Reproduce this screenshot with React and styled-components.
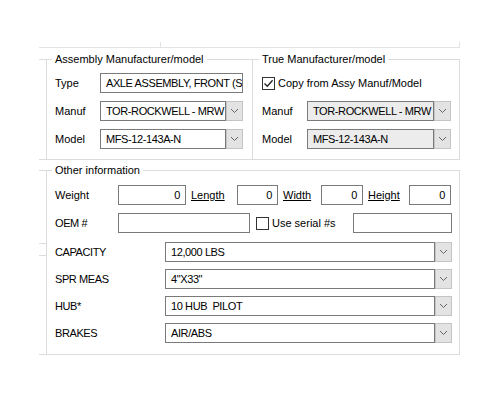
import React from "react";
import styled, { createGlobalStyle } from "styled-components";

const GlobalStyle = createGlobalStyle`
  html, body { margin: 0; padding: 0; background: #fff; }
  body {
    font-family: "Liberation Sans", Arial, sans-serif;
    font-size: 11px;
    color: #000;
  }
  * { box-sizing: border-box; }
`;

const LINE = "#dcdcdc";

const Page = styled.div`
  width: 500px;
  height: 400px;
  padding: 42px 0 0 39px;
  overflow: hidden;
`;

const TopEdge = styled.div`
  display: flex;
  width: 421px;
  height: 6px;
  border-bottom: 1px solid #e3e3e3;
  border-right: 1px solid #e3e3e3;
`;

const TopTick = styled.div`
  margin-left: 121px;
  border-left: 1px solid #e3e3e3;
`;

const Section = styled.div`
  display: flex;
  width: 421px;
  margin-top: ${(p) => p.$top}px;
  border-bottom: 1px solid ${LINE};
`;

const Stub = styled.div`
  display: flex;
  flex-direction: column;
  width: 7px;
  flex: none;
  align-self: stretch;
  border-top: 1px solid ${LINE};
`;

const StubTick = styled.div`
  margin-top: ${(p) => p.$top}px;
  border-top: 1px solid ${LINE};
`;

const Group = styled.div`
  display: flex;
  flex-direction: column;
  width: ${(p) => p.$w}px;
  border-top: 1px solid ${LINE};
  border-left: ${(p) => (p.$noLeft ? "none" : `1px solid ${LINE}`)};
  border-right: 1px solid ${LINE};
  padding: 0 ${(p) => p.$pr}px ${(p) => p.$pb}px ${(p) => p.$pl}px;
`;

const Legend = styled.div`
  align-self: flex-start;
  margin: -7px 0 0 -3px;
  padding: 0 3px;
  height: 13px;
  line-height: 13px;
  background: #fff;
`;

const FormGrid = styled.div`
  display: grid;
  grid-template-columns: 45px ${(p) => p.$field}px;
  grid-auto-rows: 20px;
  row-gap: 8px;
  margin-top: 7px;
  align-items: center;
`;

const Label = styled.div`
  line-height: 20px;
  white-space: nowrap;
  width: ${(p) => (p.$w ? `${p.$w}px` : "auto")};
  flex: none;
  letter-spacing: ${(p) => (p.$caps ? "-0.4px" : "normal")};
`;

const LinkLabel = styled.div`
  width: ${(p) => p.$w}px;
  flex: none;
  padding-left: 5px;
  line-height: 20px;
  text-decoration: underline;
`;

const TextBox = styled.div`
  height: 20px;
  width: ${(p) => (p.$w ? `${p.$w}px` : "auto")};
  flex: none;
  border: 1px solid #7a7a7a;
  background: #fff;
  padding: 0 ${(p) => (p.$right ? 5 : 0)}px 0 5px;
  line-height: 18px;
  text-align: ${(p) => (p.$right ? "right" : "left")};
  white-space: nowrap;
  overflow: hidden;
  letter-spacing: -0.4px;
`;

const SelectWrap = styled.div`
  display: flex;
  height: 20px;
  flex: 1;
  min-width: 0;
`;

const SelectField = styled.div`
  flex: 1;
  min-width: 0;
  border: 1px solid #7a7a7a;
  background: ${(p) => (p.$disabled ? "#ececec" : "#fff")};
  padding: 0 2px 0 5px;
  line-height: 18px;
  white-space: nowrap;
  overflow: hidden;
  letter-spacing: -0.4px;
`;

const SelectButton = styled.div`
  width: 17px;
  flex: none;
  display: flex;
  align-items: center;
  justify-content: center;
  background: #e3e3e3;
  border: 1px solid #c4c4c4;
`;

const CheckRow = styled.div`
  grid-column: 1 / span 2;
  display: flex;
  align-items: center;
  gap: 3px;
`;

const Box = styled.div`
  width: 13px;
  height: 13px;
  flex: none;
  border: 1px solid #333;
  background: #fff;
  display: flex;
  align-items: center;
  justify-content: center;
  margin-left: ${(p) => p.$ml || 0}px;
`;

const Rows = styled.div`
  display: flex;
  flex-direction: column;
  gap: ${(p) => p.$gap}px;
  margin-top: ${(p) => p.$top}px;
`;

const Row = styled.div`
  display: flex;
  align-items: center;
  height: 20px;
`;

const Spacer = styled.div`
  flex: 1;
`;

const Chevron = () => (
  <svg width="9" height="6" viewBox="0 0 9 6">
    <path d="M1 1 L4.5 4.5 L8 1" fill="none" stroke="#666" strokeWidth="1" />
  </svg>
);

const Check = () => (
  <svg width="11" height="11" viewBox="0 0 11 11">
    <path d="M1.5 5.5 L4.3 8.3 L9.6 2.2" fill="none" stroke="#222" strokeWidth="1.3" />
  </svg>
);

const Select = ({ value, disabled }) => (
  <SelectWrap>
    <SelectField $disabled={disabled}>{value}</SelectField>
    <SelectButton>
      <Chevron />
    </SelectButton>
  </SelectWrap>
);

const specs = [
  ["CAPACITY", "12,000 LBS"],
  ["SPR MEAS", '4"X33"'],
  ["HUB*", "10 HUB\u00a0\u00a0PILOT"],
  ["BRAKES", "AIR/ABS"],
];

export default function App() {
  return (
    <Page>
      <GlobalStyle />
      <TopEdge>
        <TopTick />
      </TopEdge>

      <Section $top={11}>
        <Stub />
        <Group $w={207} $pl={8} $pr={8} $pb={10}>
          <Legend>Assembly Manufacturer/model</Legend>
          <FormGrid $field={143}>
            <Label>Type</Label>
            <TextBox>AXLE ASSEMBLY, FRONT (STEER)</TextBox>
            <Label>Manuf</Label>
            <Select value="TOR-ROCKWELL - MRW" />
            <Label>Model</Label>
            <Select value="MFS-12-143A-N" />
          </FormGrid>
        </Group>
        <Group $w={207} $noLeft $pl={9} $pr={8} $pb={10}>
          <Legend>True Manufacturer/model</Legend>
          <FormGrid $field={144}>
            <CheckRow>
              <Box>
                <Check />
              </Box>
              Copy from Assy Manuf/Model
            </CheckRow>
            <Label>Manuf</Label>
            <Select value="TOR-ROCKWELL - MRW" disabled />
            <Label>Model</Label>
            <Select value="MFS-12-143A-N" disabled />
          </FormGrid>
        </Group>
      </Section>

      <Section $top={10}>
        <Stub>
          <StubTick $top={72} />
          <StubTick $top={11} />
        </Stub>
        <Group $w={414} $pl={8} $pr={7} $pb={11}>
          <Legend>Other information</Legend>
          <Rows $gap={8} $top={8}>
            <Row>
              <Label $w={63}>Weight</Label>
              <TextBox $w={68} $right>0</TextBox>
              <LinkLabel $w={51}>Length</LinkLabel>
              <TextBox $w={41} $right>0</TextBox>
              <LinkLabel $w={43}>Width</LinkLabel>
              <TextBox $w={42} $right>0</TextBox>
              <LinkLabel $w={46}>Height</LinkLabel>
              <TextBox $w={42} $right>0</TextBox>
            </Row>
            <Row>
              <Label $w={63} $caps>OEM #</Label>
              <TextBox $w={132} />
              <Box $ml={6} />
              <Label style={{ marginLeft: 3 }}>Use serial #s</Label>
              <Spacer />
              <TextBox $w={99} />
            </Row>
          </Rows>
          <Rows $gap={7} $top={9}>
            {specs.map(([label, value]) => (
              <Row key={label}>
                <Label $w={110} $caps>{label}</Label>
                <Select value={value} />
              </Row>
            ))}
          </Rows>
        </Group>
      </Section>
    </Page>
  );
}
